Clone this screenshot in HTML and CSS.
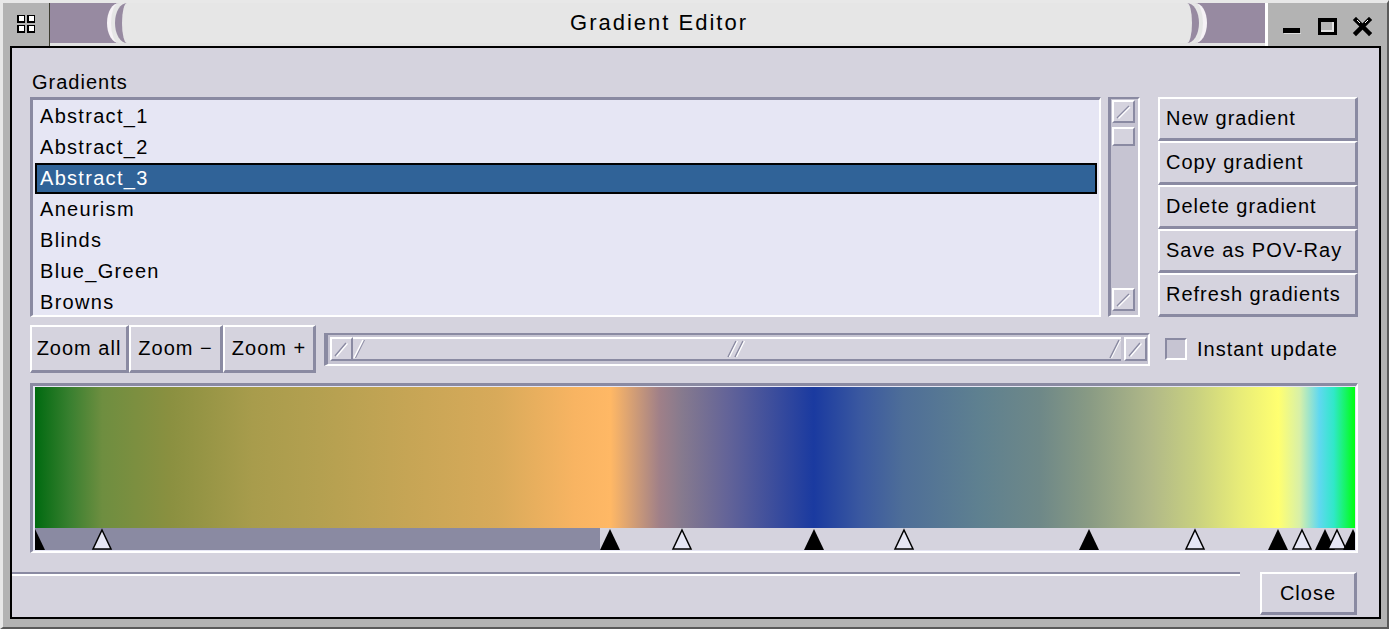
FILE: index.html
```html
<!DOCTYPE html>
<html lang="en">
<head>
    <meta charset="UTF-8">
    <meta name="viewport" content="width=device-width, initial-scale=1.0">
    <title>Gradient Editor</title>
    <link rel="stylesheet" href="styles.css">
</head>
<body>

    <div class="window">
        <div class="titlebar">
            <div class="tb-menu">
                <svg width="18" height="18" viewBox="0 0 18 18">
                    <rect x="0" y="0" width="8" height="8" fill="#000"/>
                    <rect x="2" y="1" width="5" height="5" fill="#fff"/>
                    <rect x="10" y="0" width="8" height="8" fill="#000"/>
                    <rect x="12" y="1" width="5" height="5" fill="#fff"/>
                    <rect x="0" y="10" width="8" height="8" fill="#000"/>
                    <rect x="2" y="11" width="5" height="5" fill="#fff"/>
                    <rect x="10" y="10" width="8" height="8" fill="#000"/>
                    <rect x="12" y="11" width="5" height="5" fill="#fff"/>
                </svg>
            </div>
            <div class="tb-bar">
                <div class="tb-cap">
                    <span class="tb-arc left"></span>
                    <span class="tb-title">Gradient Editor</span>
                    <span class="tb-arc right"></span>
                </div>
            </div>
            <div class="tb-btns">
                <!-- minimize -->
                <svg width="20" height="20" viewBox="0 0 20 20">
                    <rect x="1" y="11" width="17" height="5" fill="#000"/>
                    <rect x="2" y="16" width="17" height="1" fill="#dcdcdc"/>
                </svg>
                <!-- maximize -->
                <svg width="20" height="20" viewBox="0 0 20 20">
                    <rect x="1" y="1" width="19" height="17" fill="#000"/>
                    <rect x="4" y="5" width="13" height="10" fill="#e4e4e4"/>
                    <rect x="4" y="5" width="11" height="8" fill="#b3b3b3"/>
                </svg>
                <!-- close -->
                <svg width="20" height="20" viewBox="0 0 20 20">
                    <path d="M4 3 L17 16 M17 3 L4 16" stroke="#000" stroke-width="4.5" stroke-linecap="square"/>
                    <path d="M5 3 L8 6 M16 3 L13 6" stroke="#fff" stroke-width="1"/>
                </svg>
            </div>
        </div>

        <div class="client">
            <div class="main">
                <div class="label">Gradients</div>

                <div class="top-row">
                    <div class="list">
                        <div class="row">Abstract_1</div>
                        <div class="row">Abstract_2</div>
                        <div class="row selected">Abstract_3</div>
                        <div class="row">Aneurism</div>
                        <div class="row">Blinds</div>
                        <div class="row">Blue_Green</div>
                        <div class="row">Browns</div>
                    </div>

                    <div class="vscroll">
                        <div class="sbtn">
                            <svg viewBox="0 0 19 19"><line x1="3" y1="16" x2="15" y2="4" stroke="#8a8aa2" stroke-width="1.5"/><line x1="4.5" y1="16.5" x2="16" y2="5" stroke="#fff" stroke-width="1.2"/></svg>
                        </div>
                        <div class="sbtn vthumb"></div>
                        <div class="trough"></div>
                        <div class="sbtn">
                            <svg viewBox="0 0 19 19"><line x1="3" y1="16" x2="15" y2="4" stroke="#8a8aa2" stroke-width="1.5"/><line x1="4.5" y1="16.5" x2="16" y2="5" stroke="#fff" stroke-width="1.2"/></svg>
                        </div>
                    </div>

                    <div class="actions">
                        <button class="btn">New gradient</button>
                        <button class="btn">Copy gradient</button>
                        <button class="btn">Delete gradient</button>
                        <button class="btn">Save as POV-Ray</button>
                        <button class="btn">Refresh gradients</button>
                    </div>
                </div>

                <div class="zoom-row">
                    <div class="zoom-btns">
                        <button class="btn zoom-all">Zoom all</button>
                        <button class="btn zoom-out">Zoom &minus;</button>
                        <button class="btn zoom-in">Zoom +</button>
                    </div>

                    <div class="hscroll">
                        <div class="sbtn">
                            <svg viewBox="0 0 19 20"><line x1="3" y1="17" x2="14" y2="4" stroke="#8a8aa2" stroke-width="1.5"/><line x1="4.5" y1="17.5" x2="15.5" y2="4.5" stroke="#fff" stroke-width="1.2"/></svg>
                        </div>
                        <div class="hthumb">
                            <svg class="bevel" width="12" height="20" viewBox="0 0 12 20"><line x1="1" y1="19" x2="10" y2="1" stroke="#fff" stroke-width="1.5"/><line x1="2.5" y1="19" x2="11.5" y2="1" stroke="#8a8aa2" stroke-width="1"/></svg>
                            <svg width="22" height="18" viewBox="0 0 22 18">
                                <line x1="2" y1="17" x2="10" y2="1" stroke="#8a8aa2" stroke-width="1.5"/>
                                <line x1="3.5" y1="17" x2="11.5" y2="1" stroke="#fff" stroke-width="1.2"/>
                                <line x1="9" y1="17" x2="17" y2="1" stroke="#8a8aa2" stroke-width="1.5"/>
                                <line x1="10.5" y1="17" x2="18.5" y2="1" stroke="#fff" stroke-width="1.2"/>
                            </svg>
                            <svg class="bevel" width="12" height="20" viewBox="0 0 12 20"><line x1="1" y1="19" x2="10" y2="1" stroke="#8a8aa2" stroke-width="1.5"/><line x1="2.5" y1="19" x2="11.5" y2="1" stroke="#fff" stroke-width="1"/></svg>
                        </div>
                        <div class="sbtn">
                            <svg viewBox="0 0 19 20"><line x1="3" y1="17" x2="14" y2="4" stroke="#8a8aa2" stroke-width="1.5"/><line x1="4.5" y1="17.5" x2="15.5" y2="4.5" stroke="#fff" stroke-width="1.2"/></svg>
                        </div>
                    </div>

                    <label class="check"><span class="box"></span>Instant update</label>
                </div>

                <div class="preview">
                    <div class="gradient"></div>
                    <svg class="markers" width="1320" height="22" viewBox="0 0 1320 22">
                        <rect x="0" y="0" width="1320" height="22" fill="#d5d3de"/>
                        <!-- selected range -->
                        <rect x="0" y="0" width="565" height="22" fill="#8a8aa2"/>
                        <polygon class="stop" points="0,1 10,22 -10,22"/>
                        <polygon class="mid" points="67,2 76,21 58,21"/>
                        <polygon class="stop" points="575,1 585,22 565,22"/>
                        <polygon class="mid" points="647,2 656,21 638,21"/>
                        <polygon class="stop" points="779,1 789,22 769,22"/>
                        <polygon class="mid" points="869,2 878,21 860,21"/>
                        <polygon class="stop" points="1054,1 1064,22 1044,22"/>
                        <polygon class="mid" points="1160,2 1169,21 1151,21"/>
                        <polygon class="stop" points="1243,1 1253,22 1233,22"/>
                        <polygon class="mid" points="1267,2 1276,21 1258,21"/>
                        <polygon class="stop" points="1290,1 1300,22 1280,22"/>
                        <polygon class="mid" points="1302,2 1311,21 1293,21"/>
                        <polygon class="stop" points="1318,1 1328,22 1308,22"/>
                    </svg>
                </div>
            </div>

            <div class="footer">
                <div class="separator"></div>
                <button class="btn close">Close</button>
            </div>
        </div>
    </div>

</body>
</html>
```

FILE: styles.css
```css
body {
    margin: 0;
    background: #b3b3b3;
    font-family: "Liberation Sans", Arial, sans-serif;
    font-size: 20px;
    letter-spacing: 1px;
    color: #000;
}

.window {
    width: 1389px;
    height: 629px;
    box-sizing: border-box;
    border-style: solid;
    border-width: 3px 2px 2px 3px;
    border-color: #e8e8e8 #5a5a5a #5a5a5a #e8e8e8;
    background: #b3b3b3;
    display: flex;
    flex-direction: column;
}

/* title bar */
.titlebar {
    display: flex;
    height: 43px;
    flex: none;
}

.tb-menu {
    width: 47px;
    box-sizing: border-box;
    border-right: 1px solid #3c3c30;
    padding: 12px 0 0 14px;
}

.tb-bar {
    flex: 1;
    display: flex;
    background: #978aa1;
    padding: 0 58px 0 57px;
    border-bottom: 3px solid #e2e2e2;
}

.tb-cap {
    flex: 1;
    display: flex;
    align-items: center;
    background: #e6e6e6;
    border-left: 4px solid #f6f2f6;
    border-right: 4px solid #f6f2f6;
    border-radius: 12px / 20px;
}

.tb-arc {
    align-self: stretch;
    width: 8px;
    border: 0 solid #978aa1;
}

.tb-arc.left {
    border-left-width: 7px;
    border-radius: 12px 0 0 12px / 20px 0 0 20px;
    margin-left: 4px;
}

.tb-arc.right {
    border-right-width: 7px;
    border-radius: 0 12px 12px 0 / 0 20px 20px 0;
    margin-right: 4px;
}

.tb-title {
    flex: 1;
    text-align: center;
    font-size: 22px;
    letter-spacing: 2px;
    padding-left: 4px;
}

.tb-btns {
    width: 122px;
    box-sizing: border-box;
    border-left: 3px solid #fff;
    display: flex;
    align-items: flex-start;
    gap: 15px;
    padding: 14px 0 0 14px;
}

/* client area */
.client {
    flex: 1;
    margin: 0 6px 8px 7px;
    border: 2px solid #000;
    background: #d5d3de;
    display: flex;
    flex-direction: column;
}

.main {
    padding: 22px 21px 0 18px;
}

.label {
    height: 27px;
    line-height: 24px;
    padding-left: 2px;
}

.top-row {
    display: flex;
    height: 220px;
}

.list {
    flex: 1;
    box-sizing: border-box;
    border-style: solid;
    border-width: 3px 2px 2px 3px;
    border-color: #8a8aa2 #fff #fff #8a8aa2;
    background: #e6e6f4;
    padding: 1px 2px 0;
    overflow: hidden;
}

.row {
    height: 31px;
    box-sizing: border-box;
    line-height: 27px;
    border: 2px solid transparent;
    padding-left: 3px;
    white-space: nowrap;
    letter-spacing: 1.3px;
}

.row.selected {
    background: #306398;
    border-color: #000;
    color: #fff;
}

.vscroll {
    width: 32px;
    margin-left: 7px;
    box-sizing: border-box;
    border-style: solid;
    border-width: 2px 2px 2px 3px;
    border-color: #8a8aa2 #fff #fff #8a8aa2;
    background: #c6c4d2;
    padding: 1px 3px 4px 1px;
    display: flex;
    flex-direction: column;
}

.sbtn {
    flex: none;
    width: 23px;
    height: 23px;
    box-sizing: border-box;
    background: #d5d3de;
    border-style: solid;
    border-width: 2px;
    border-color: #fff #8a8aa2 #8a8aa2 #fff;
    display: flex;
}

.sbtn svg {
    width: 100%;
    height: 100%;
}

.vthumb {
    height: 19px;
    margin-top: 4px;
}

.trough {
    flex: 1;
}

.actions {
    width: 200px;
    margin-left: 18px;
    display: flex;
    flex-direction: column;
}

/* buttons */
.btn {
    font: inherit;
    letter-spacing: inherit;
    color: #000;
    background: #d5d3de;
    border-style: solid;
    border-width: 2px 3px 3px 2px;
    border-color: #fff #8a8aa2 #8a8aa2 #fff;
    margin: 0;
    padding: 0;
    box-sizing: border-box;
    white-space: nowrap;
}

.actions .btn {
    height: 44px;
    text-align: left;
    padding-left: 6px;
}

.zoom-row {
    display: flex;
    align-items: center;
    height: 48px;
    margin-top: 8px;
}

.zoom-btns {
    display: flex;
    height: 48px;
}

.zoom-btns .btn {
    height: 48px;
    text-align: center;
}

.zoom-all { width: 99px; }
.zoom-out { width: 94px; }
.zoom-in { width: 93px; }

.hscroll {
    width: 826px;
    height: 33px;
    margin-left: 8px;
    box-sizing: border-box;
    border-style: solid;
    border-width: 2px 2px 2px 4px;
    border-color: #8a8aa2 #fff #fff #8a8aa2;
    background: #c6c4d2;
    padding: 2px 1px 3px 2px;
    display: flex;
}

.hscroll .sbtn {
    height: 24px;
}

.hthumb {
    flex: 1;
    margin-right: 3px;
    box-sizing: border-box;
    background: #d5d3de;
    border-style: solid;
    border-width: 2px 0 2px 0;
    border-color: #fff #8a8aa2 #8a8aa2 #fff;
    display: flex;
    align-items: center;
    justify-content: space-between;
}

.check {
    display: flex;
    align-items: center;
    gap: 10px;
    margin-left: 15px;
}

.box {
    width: 22px;
    height: 22px;
    box-sizing: border-box;
    border-style: solid;
    border-width: 2px;
    border-color: #8a8aa2 #fff #fff #8a8aa2;
    background: #c6c4d2;
}

/* gradient preview */
.preview {
    margin-top: 10px;
    border-style: solid;
    border-width: 3px 2px 2px 3px;
    border-color: #8a8aa2 #fff #fff #8a8aa2;
    padding: 1px 1px 1px 2px;
    background: #e6e6f4;
}

.gradient {
    height: 141px;
    background: linear-gradient(to right,
        #006a10 0%, #3a8030 2.7%, #6e8e40 5.1%, #8a9040 10.2%,
        #a89c4c 16.5%, #b4a050 21.5%, #d8aa5a 35%, #f8b462 40.9%,
        #ffb865 43.6%, #a08088 47.3%, #867a8e 49%, #646498 52.4%,
        #1a3aa0 59%, #3a58a0 62.5%, #4e6e98 65.8%, #5e8090 71.4%,
        #6e8888 76.1%, #889a84 79.8%, #b0b888 84.5%, #c8d080 87.9%,
        #e8ec78 91.3%, #ffff70 94.2%, #d8f0a8 95.8%, #60d8f0 97.3%,
        #30e8c8 98.4%, #00ff10 100%);
}

.markers {
    display: block;
}

.markers .stop {
    fill: #000;
}

.markers .mid {
    fill: #e6e6f4;
    stroke: #000;
    stroke-width: 1.5;
}

/* footer */
.footer {
    display: flex;
    align-items: flex-start;
    margin-top: 19px;
    padding-right: 22px;
}

.separator {
    flex: 1;
    margin-right: 20px;
    border-top: 2px solid #8a8aa2;
    border-bottom: 2px solid #fff;
}

.close {
    width: 97px;
    height: 43px;
    text-align: center;
}
```
